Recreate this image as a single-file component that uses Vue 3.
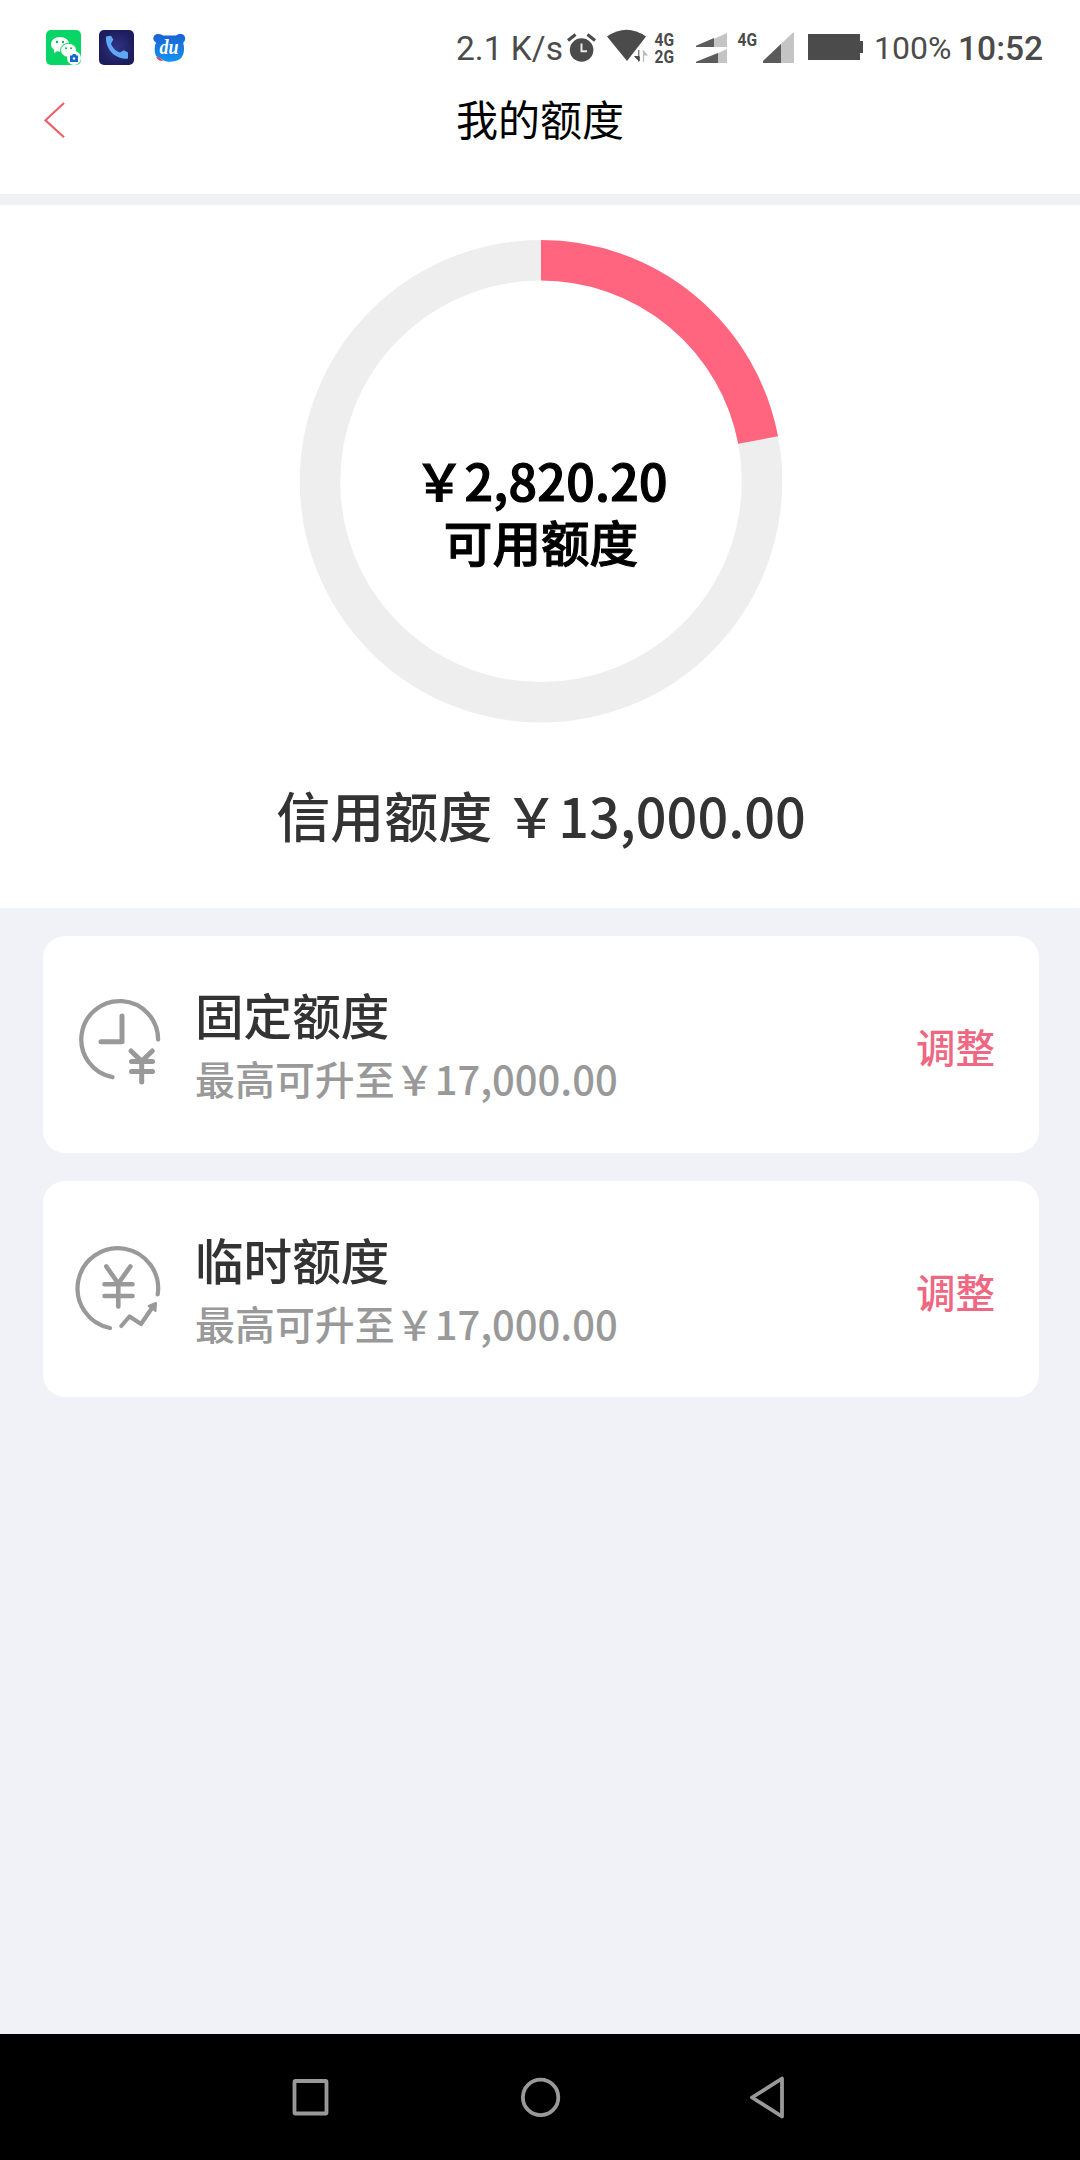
<script setup>
const total = '￥13,000.00'
const available = '￥2,820.20'
const cards = [
  { kind: 'fixed', title: '固定额度', note: '最高可升至￥17,000.00', action: '调整' },
  { kind: 'temporary', title: '临时额度', note: '最高可升至￥17,000.00', action: '调整' },
]

const radius = 221
const circumference = 2 * Math.PI * radius
const usedArc = `${circumference * 0.22} ${circumference}`
</script>

<template>
  <div class="screen">
    <div class="status">
      <div class="apps">
        <svg width="36" height="36" viewBox="0 0 36 36">
          <rect x="0" y="0" width="35" height="35" rx="5" fill="#07d565" />
          <path d="M14 7C8.700 7 5 10.200 5 14.300c0 2.400 1.200 4.300 3.200 5.600L8 23l3-1.800c1 .3 2 .4 3 .4 5.300 0 9.200-3.200 9.200-7.300S19.300 7 14 7z" fill="#fff" />
          <circle cx="11" cy="12" r="1.200" fill="#07b957" />
          <circle cx="17" cy="12" r="1.200" fill="#07b957" />
          <ellipse cx="22.500" cy="20.300" rx="8" ry="7" fill="#fff" stroke="#07d565" stroke-width="1" />
          <circle cx="20" cy="18.300" r="1" fill="#07b957" />
          <circle cx="25" cy="18.300" r="1" fill="#07b957" />
          <circle cx="28" cy="28" r="7" fill="#fff" />
          <path d="M24 25.500h2l1-1.500h2.500l1 1.500H32V32h-8z" fill="#1769c8" />
          <circle cx="28" cy="28.500" r="1.200" fill="#fff" />
        </svg>
        <svg width="36" height="36" viewBox="0 0 36 36">
          <defs>
            <radialGradient id="night"><stop offset="0" stop-color="#303486" /><stop offset="1" stop-color="#1d1c5c" /></radialGradient>
          </defs>
          <rect x="0" y="0" width="35" height="35" rx="5" fill="url(#night)" />
          <path d="M7 6.500l5-.8 2.300 3.800-2.300 4.500c2 4.500 5 7 9 8.500l3.800-2.300 4.200 2.300v6c-4 .8-9.500-.5-13.500-3.500C10 21 6.500 14.500 7 6.500z" fill="#5fa8f5" />
        </svg>
        <svg width="36" height="36" viewBox="0 0 36 36">
          <defs>
            <linearGradient id="bear" x1="0" y1="0" x2="0" y2="1"><stop offset="0" stop-color="#1862d4" /><stop offset="1" stop-color="#1593ef" /></linearGradient>
          </defs>
          <path d="M6 4c2-.2 4 .6 5 1.500h13C25.500 4.300 27 4 28.500 4c3 0 4.700 2 4.700 4.500 0 2-.9 3.300-2 4.200C33 19 32 26 28 29c-5 3.500-13 3.200-16.500 1.500C9 28 6 28 4 26c-1.800-4-1.800-9 0-13.500C2.700 11.500 1.300 10.500 1.300 8.500 1.300 6 3.300 4 6 4z" fill="url(#bear)" />
          <path d="M4 27c3 .2 5 1.200 7 4-3.500.1-5.500-1.500-7-4z" fill="#e4404e" />
          <text x="7.500" y="23.700" textLength="19" lengthAdjust="spacingAndGlyphs" class="du">du</text>
        </svg>
      </div>
      <div class="indicators">
        <span class="speed">2.1 K/s</span>
        <svg width="41" height="96" viewBox="566 0 41 96">
          <circle cx="581.600" cy="50" r="11.800" fill="#4b4b4b" />
          <path d="M568 40.500l7.500-6M595 40.500l-7.500-6" stroke="#4b4b4b" stroke-width="3.200" />
          <path d="M581.500 43.500v7.700h5.500" fill="none" stroke="#e8e8e8" stroke-width="2" />
        </svg>
        <svg width="41" height="96" viewBox="607 0 41 96">
          <path d="M607 36.500Q626.500 23 646 36.500L627 61z" fill="#4b4b4b" />
          <path d="M632 62l6-11h2v12z" fill="#fff" />
          <path d="M638.800 50v11.500M639.200 61l-4.500-4.500h4.500z" fill="#4b4b4b" stroke="#4b4b4b" stroke-width="1" />
          <path d="M643.500 62V51l3.500 4h-3.500" fill="#bbb" stroke="#bbb" stroke-width="1.200" />
        </svg>
        <svg width="48" height="96" viewBox="648 0 48 96" class="radio">
          <text x="654.500" y="45.500" textLength="19.500" lengthAdjust="spacingAndGlyphs">4G</text>
          <text x="654.500" y="62.700" textLength="19.500" lengthAdjust="spacingAndGlyphs">2G</text>
        </svg>
        <svg width="32" height="96" viewBox="696 0 32 96">
          <path d="M696 47l31-14v14zM696 63l31-14v14z" fill="#c4c4c4" />
          <path d="M696 47v-1.300L714 38v9zM696 63v-1.300L718 53v10z" fill="#5b5b5b" />
        </svg>
        <svg width="35" height="96" viewBox="728 0 35 96" class="radio">
          <text x="737.500" y="45.500" textLength="19.500" lengthAdjust="spacingAndGlyphs">4G</text>
        </svg>
        <svg width="32" height="96" viewBox="763 0 32 96">
          <path d="M763 63v-2l30-28.500h1V63z" fill="#c4c4c4" />
          <path d="M763 63v-2l18-17v19z" fill="#5b5b5b" />
        </svg>
        <svg width="79" height="96" viewBox="795 0 79 96">
          <path d="M808 34h52v7h3v12h-3v7h-52z" fill="#4b4b4b" />
        </svg>
        <span class="percent">100%</span>
        <span class="clock">10:52</span>
      </div>
    </div>

    <header class="titlebar">
      <svg class="back" width="22" height="38" viewBox="45 101 22 38">
        <path d="M65 103L46.500 120.300 65 137.300" fill="none" stroke="#ea6168" stroke-width="2.200" />
      </svg>
      <h1>我的额度</h1>
    </header>

    <section class="summary">
      <div class="ring">
        <svg width="484" height="484" viewBox="-242 -242 484 484">
          <circle cy=".3" :r="radius" fill="none" stroke="#eeeeee" stroke-width="40.500" />
          <circle cx="-.3" :r="radius" fill="none" stroke="#ff657e" stroke-width="40.500" :stroke-dasharray="usedArc" transform="rotate(-90)" />
        </svg>
        <div class="ring-label">
          <strong class="amount">{{ available }}</strong>
          <strong class="caption">可用额度</strong>
        </div>
      </div>
      <p class="credit"><span>信用额度</span><span class="credit-sum">{{ total }}</span></p>
    </section>

    <main class="cards">
      <article v-for="card in cards" :key="card.kind" class="card">
        <svg v-if="card.kind === 'fixed'" class="icon" width="96" height="96" viewBox="72 992 96 96">
          <path d="M158.100 1039.500A38.400 38.400 0 1 0 112.500 1077.200" stroke-width="4.300" />
          <path d="M122 1016v25.800h-21" stroke-width="5" />
          <path d="M131 1051l10.700 10.300L152.300 1051M141.700 1061.500v20.500M131.500 1061.500h21M131.500 1071.500h21" stroke-width="5" />
        </svg>
        <svg v-else class="icon" width="96" height="96" viewBox="72 1236.500 96 96">
          <path d="M157.700 1294A40.300 40.300 0 1 0 110 1327.500" stroke-width="4.200" />
          <path d="M106.300 1266l12 17 12-17M118.300 1283v23M104.500 1283.700h28M104.500 1295.500h28" stroke-width="4.600" />
          <path d="M121.300 1325.500l8.200-9.500 11.500 7.500 11-16" stroke-width="4.200" />
          <path d="M148.500 1305.500l7.500-3-.5 8z" fill="#999" stroke-width="2" />
        </svg>
        <div class="info">
          <h2>{{ card.title }}</h2>
          <p>{{ card.note }}</p>
        </div>
        <a class="action">{{ card.action }}</a>
      </article>
    </main>

    <nav class="softkeys">
      <svg width="44" height="44" viewBox="-22 -22 44 44"><rect x="-16.500" y="-16" width="32" height="32.500" rx="1" /></svg>
      <svg width="44" height="44" viewBox="-22 -22 44 44"><circle cx=".6" cy=".4" r="17.700" /></svg>
      <svg width="44" height="44" viewBox="-22 -22 44 44"><path d="M-17 .5L13-18.500V19.500z" /></svg>
    </nav>
  </div>
</template>

<style>
body {
  margin: 0;
}
</style>

<style scoped>
.screen {
  width: 1080px;
  height: 2160px;
  display: flex;
  flex-direction: column;
  background: #f0f2f7;
  font-family: "Noto Sans CJK SC", "Noto Sans", sans-serif;
  color: #333;
  overflow: hidden;
}
svg {
  display: block;
  flex: none;
}
h1, h2, p {
  margin: 0;
}
.status {
  height: 96px;
  flex: none;
  display: flex;
  justify-content: space-between;
  align-items: center;
  padding-left: 46px;
  background: #fff;
  font-family: Roboto, sans-serif;
  color: #4b4b4b;
}
.apps {
  display: flex;
  gap: 17px;
}
.du {
  font: italic 700 20px "Liberation Serif", serif;
  fill: #fff;
}
.indicators {
  width: 624px;
  flex: none;
  display: flex;
  align-items: center;
  white-space: nowrap;
}
.speed {
  width: 110px;
  font-size: 33.500px;
}
.radio text {
  font: 700 17.500px Roboto, sans-serif;
  fill: #4b4b4b;
}
.percent {
  width: 84px;
  font-size: 32px;
}
.clock {
  font-size: 33.600px;
  font-weight: 500;
}
.titlebar {
  height: 98px;
  flex: none;
  display: grid;
  grid-template-columns: 100px 1fr 100px;
  background: #fff;
  border-bottom: 11px solid #f0f1f3;
}
.back {
  margin: 5px 0 0 44px;
}
h1 {
  margin-top: -1px;
  text-align: center;
  font-size: 42px;
  font-weight: 400;
  line-height: 46px;
  color: #000;
}
.summary {
  height: 703px;
  flex: none;
  display: flex;
  flex-direction: column;
  align-items: center;
  background: #fff;
}
.ring {
  display: grid;
  margin: 34px 0 0 2px;
}
.ring > * {
  grid-area: 1 / 1;
}
.ring-label {
  display: flex;
  flex-direction: column;
  align-items: center;
  padding-top: 208.500px;
  line-height: 62px;
  color: #000;
}
.amount {
  font-size: 50px;
  font-weight: 500;
  letter-spacing: 0.300px;
  -webkit-text-stroke: 1.200px #000;
}
.caption {
  font-size: 48.600px;
  font-weight: 500;
  -webkit-text-stroke: 1px #000;
}
.credit {
  display: flex;
  margin: 52px 0 0 2px;
  font-size: 54px;
  line-height: 80px;
  font-weight: 500;
}
.credit-sum {
  margin-left: 12px;
}
.cards {
  flex: 1;
  display: flex;
  flex-direction: column;
  gap: 28px;
  padding: 28px 41px 0 43px;
}
.card {
  height: 216.500px;
  box-sizing: border-box;
  display: flex;
  background: #fff;
  border-radius: 22px;
  padding-right: 44px;
}
.icon {
  margin: 56px 0 0 29px;
  fill: none;
  stroke: #999;
  stroke-linecap: round;
  stroke-linejoin: round;
}
.info {
  margin-left: 27px;
  padding-top: 46px;
  flex: 1;
}
h2 {
  font-size: 48.600px;
  font-weight: 500;
  line-height: 64px;
}
.info p {
  font-size: 39.950px;
  font-weight: 500;
  line-height: 65px;
  color: #999;
}
.action {
  font-size: 39.500px;
  font-weight: 500;
  line-height: 60px;
  margin-top: 80.400px;
  color: #ee6883;
}
.softkeys {
  height: 126px;
  flex: none;
  display: flex;
  justify-content: center;
  align-items: center;
  gap: 185px;
  background: #000;
}
.softkeys svg * {
  fill: none;
  stroke: #999;
  stroke-width: 3.800;
  stroke-linejoin: round;
}
</style>
